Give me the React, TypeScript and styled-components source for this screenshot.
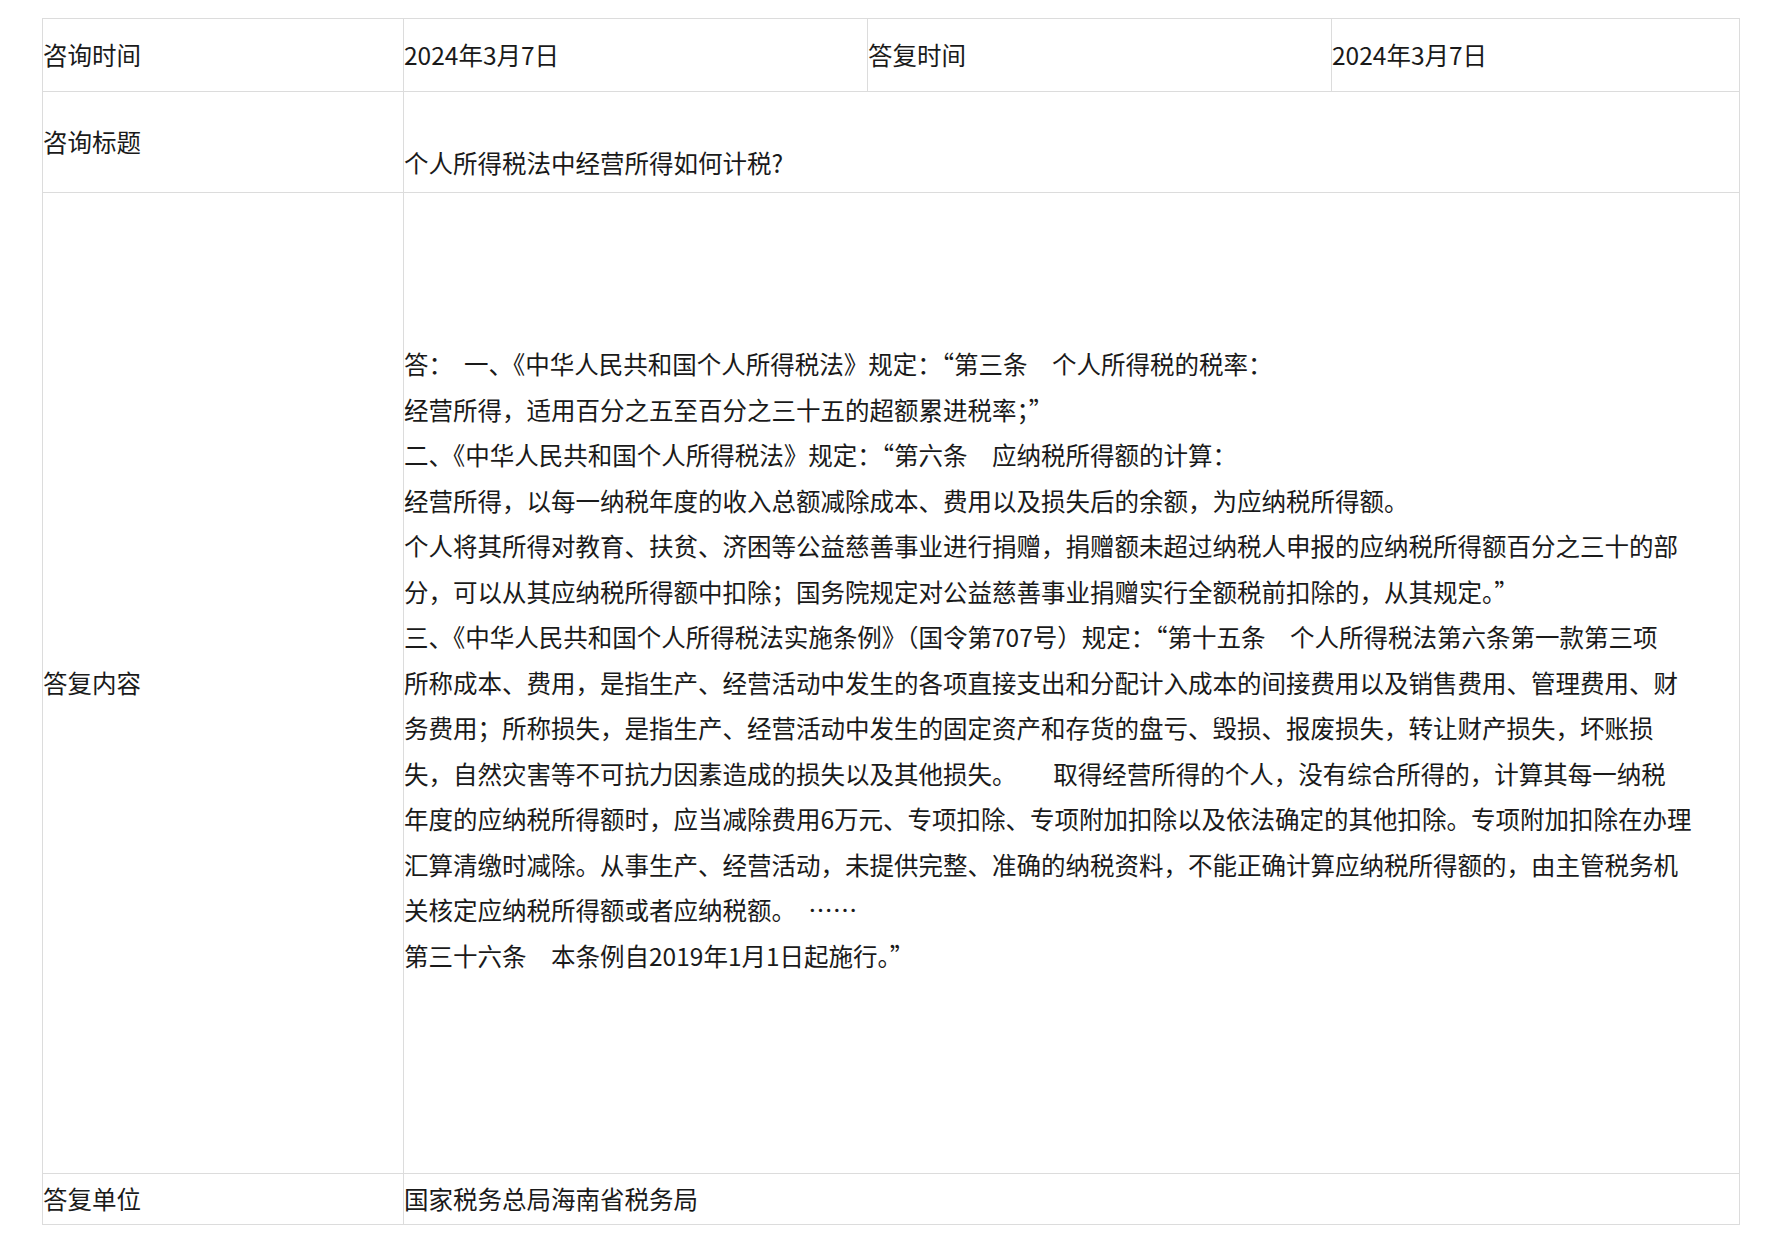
import styled, { createGlobalStyle } from 'styled-components';

const Global = createGlobalStyle`
  body {
    margin: 0;
    background: #fff;
    font-family: "Noto Sans CJK SC", "Noto Sans", sans-serif;
    color: #1a1a1a;
  }
`;

const Page = styled.div`
  padding: 18px 29px 0 42px;
`;

const Table = styled.div`
  display: grid;
  grid-template-columns: 361px 464px 464px 1fr;
  width: 1697px;
  border-top: 1px solid #dcdcdc;
  border-left: 1px solid #dcdcdc;
  font-size: 24.5px;
`;

const Cell = styled.div<{ $span?: number; $h: number; $align?: string; $pt?: number }>`
  grid-column: span ${(p) => p.$span ?? 1};
  height: ${(p) => p.$h}px;
  box-sizing: border-box;
  border-right: 1px solid #dcdcdc;
  border-bottom: 1px solid #dcdcdc;
  display: flex;
  flex-direction: column;
  justify-content: ${(p) => p.$align ?? 'center'};
  padding-top: ${(p) => p.$pt ?? 0}px;
  line-height: 45.5px;
  white-space: nowrap;
  overflow: hidden;
`;

const Line = styled.div`
  white-space: pre;
`;

const lines = [
  '答：  一、《中华人民共和国个人所得税法》规定：“第三条　个人所得税的税率：',
  '经营所得，适用百分之五至百分之三十五的超额累进税率；”',
  '二、《中华人民共和国个人所得税法》规定：“第六条　应纳税所得额的计算：',
  '经营所得，以每一纳税年度的收入总额减除成本、费用以及损失后的余额，为应纳税所得额。',
  '个人将其所得对教育、扶贫、济困等公益慈善事业进行捐赠，捐赠额未超过纳税人申报的应纳税所得额百分之三十的部',
  '分，可以从其应纳税所得额中扣除；国务院规定对公益慈善事业捐赠实行全额税前扣除的，从其规定。”',
  '三、《中华人民共和国个人所得税法实施条例》（国令第707号）规定：“第十五条　个人所得税法第六条第一款第三项',
  '所称成本、费用，是指生产、经营活动中发生的各项直接支出和分配计入成本的间接费用以及销售费用、管理费用、财',
  '务费用；所称损失，是指生产、经营活动中发生的固定资产和存货的盘亏、毁损、报废损失，转让财产损失，坏账损',
  '失，自然灾害等不可抗力因素造成的损失以及其他损失。　　取得经营所得的个人，没有综合所得的，计算其每一纳税',
  '年度的应纳税所得额时，应当减除费用6万元、专项扣除、专项附加扣除以及依法确定的其他扣除。专项附加扣除在办理',
  '汇算清缴时减除。从事生产、经营活动，未提供完整、准确的纳税资料，不能正确计算应纳税所得额的，由主管税务机',
  '关核定应纳税所得额或者应纳税额。　……',
  '第三十六条　本条例自2019年1月1日起施行。”',
];

export default function App() {
  return (
    <Page>
      <Global />
      <Table>
        <Cell $h={73}>咨询时间</Cell>
        <Cell $h={73}>2024年3月7日</Cell>
        <Cell $h={73}>答复时间</Cell>
        <Cell $h={73}>2024年3月7日</Cell>
        <Cell $h={101}>咨询标题</Cell>
        <Cell $h={101} $span={3} $pt={42}>个人所得税法中经营所得如何计税?</Cell>
        <Cell $h={981}>答复内容</Cell>
        <Cell $h={981} $span={3} $align="flex-start" $pt={148}>
          {lines.map((l, i) => (
            <Line key={i}>{l}</Line>
          ))}
        </Cell>
        <Cell $h={51}>答复单位</Cell>
        <Cell $h={51} $span={3}>国家税务总局海南省税务局</Cell>
      </Table>
    </Page>
  );
}
